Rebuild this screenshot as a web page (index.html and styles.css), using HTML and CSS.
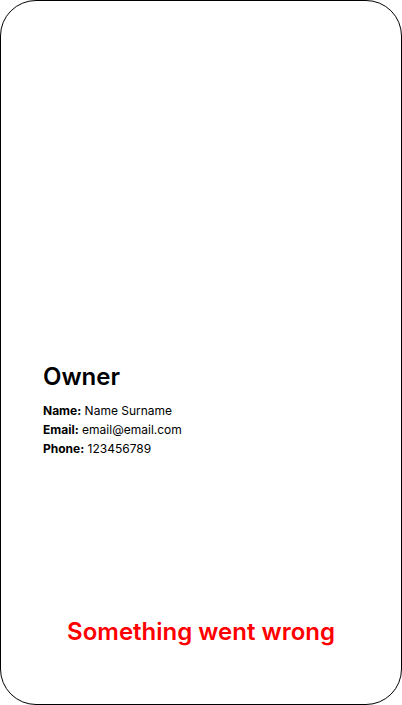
FILE: index.html
```html
<!DOCTYPE html>
<html>
<head>
<meta charset="utf-8">
<link rel="stylesheet" href="styles.css">
</head>
<body>
<div class="phone">
  <section class="owner">
    <h1 class="owner-title">Owner</h1>
    <p class="row"><b>Name:</b> Name Surname</p>
    <p class="row"><b>Email:</b> email@email.com</p>
    <p class="row"><b>Phone:</b> 123456789</p>
  </section>
  <p class="error">Something went wrong</p>
</div>
</body>
</html>
```
FILE: styles.css
```css
html, body {
  margin: 0;
  padding: 0;
  background: #fff;
}
body {
  font-family: Inter, "Noto Sans", sans-serif;
  color: #000;
}
.phone {
  box-sizing: border-box;
  width: 402px;
  height: 705px;
  border: 1px solid #000;
  border-radius: 36px;
  display: flex;
  flex-direction: column;
  padding: 0 42px;
}
.owner {
  margin-top: 360px;
}
.owner-title {
  margin: 0 0 8px;
  font-size: 24px;
  font-weight: 600;
  line-height: 32px;
}
.row {
  margin: 0;
  font-size: 12px;
  line-height: 19px;
}
.row b {
  font-weight: 700;
}
.error {
  margin: auto 0 57px;
  text-align: center;
  color: #ff0000;
  font-size: 24px;
  font-weight: 600;
  line-height: 30px;
}
```
